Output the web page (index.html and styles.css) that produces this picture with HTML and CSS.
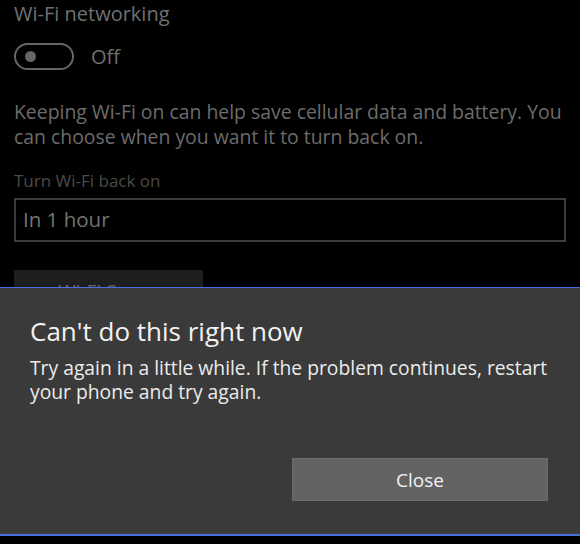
FILE: index.html
```html
<!DOCTYPE html>
<html lang="en">
<head>
  <meta charset="UTF-8" />
  <title>Wi-Fi</title>
  <meta name="viewport" content="width=device-width, initial-scale=1.0" />
  <link rel="stylesheet" href="styles.css">
</head>
<body>
  <div class="settings">
    <h2 class="section-title">Wi-Fi networking</h2>

    <div class="toggle-row">
      <span class="toggle"><span class="knob"></span></span>
      <span class="toggle-label">Off</span>
    </div>

    <p class="hint">Keeping Wi-Fi on can help save cellular data and battery. You can choose when you want it to turn back on.</p>

    <label class="field-label">Turn Wi-Fi back on</label>
    <div class="select">In 1 hour</div>

    <button class="page-btn">Wi-Fi Sense</button>
  </div>

  <!-- error flyout over the settings page -->
  <div class="dialog">
    <h1 class="dialog-title">Can't do this right now</h1>
    <p class="dialog-text">Try again in a little while. If the problem continues, restart your phone and try again.</p>
    <div class="dialog-actions">
      <button class="dialog-btn">Close</button>
    </div>
  </div>
</body>
</html>
```

FILE: styles.css
```css
* {
  margin: 0;
  padding: 0;
  box-sizing: border-box;
  font-family: 'Open Sans', 'Noto Sans', sans-serif;
}
html, body {
  width: 580px;
  height: 544px;
  overflow: hidden;
}
body {
  background: #000;
  position: relative;
}
.settings {
  padding: 0 14px;
}
.section-title {
  font-size: 20px;
  font-weight: 400;
  color: #707070;
  line-height: 28px;
}
.toggle-row {
  display: flex;
  align-items: center;
  margin-top: 15px;
  height: 27px;
}
.toggle {
  width: 60px;
  height: 27px;
  border: 2px solid #666;
  border-radius: 14px;
  display: flex;
  align-items: center;
  padding-left: 9px;
}
.knob {
  width: 11px;
  height: 11px;
  border-radius: 50%;
  background: #666;
}
.toggle-label {
  margin-left: 17px;
  font-size: 20px;
  color: #707070;
}
.hint {
  margin-top: 29px;
  margin-right: -4px;
  font-size: 19.4px;
  line-height: 25px;
  color: #6c6c6c;
}
.field-label {
  display: block;
  margin-top: 20px;
  font-size: 17px;
  line-height: 24px;
  color: #4a4a4a;
}
.select {
  margin-top: 5px;
  width: 552px;
  height: 44px;
  border: 2px solid #3c3c3c;
  padding-left: 7px;
  font-size: 20.5px;
  line-height: 39px;
  color: #737373;
}
.page-btn {
  margin-top: 28px;
  width: 189px;
  height: 40px;
  border: none;
  background: #1e1e1e;
  color: #666;
  font-size: 19px;
  padding-top: 2px;
  vertical-align: top;
}
.dialog {
  position: absolute;
  left: 0;
  right: 0;
  top: 287px;
  height: 249px;
  background: #3a3a3a;
  border-top: 1px solid #4a6ee0;
  border-bottom: 2px solid #4a6ee0;
  padding: 26px 30px 0 30px;
}
.dialog-title {
  font-size: 26px;
  font-weight: 400;
  color: #f2f2f2;
  line-height: 35px;
}
.dialog-text {
  margin-top: 7px;
  font-size: 19.3px;
  line-height: 24px;
  color: #ececec;
}
.dialog-actions {
  display: flex;
  justify-content: flex-end;
  margin-top: 54px;
  padding-right: 2px;
}
.dialog-btn {
  width: 256px;
  height: 43px;
  background: #636363;
  border: 1px solid #6c6c6c;
  color: #f2f2f2;
  font-size: 19px;
}
```
